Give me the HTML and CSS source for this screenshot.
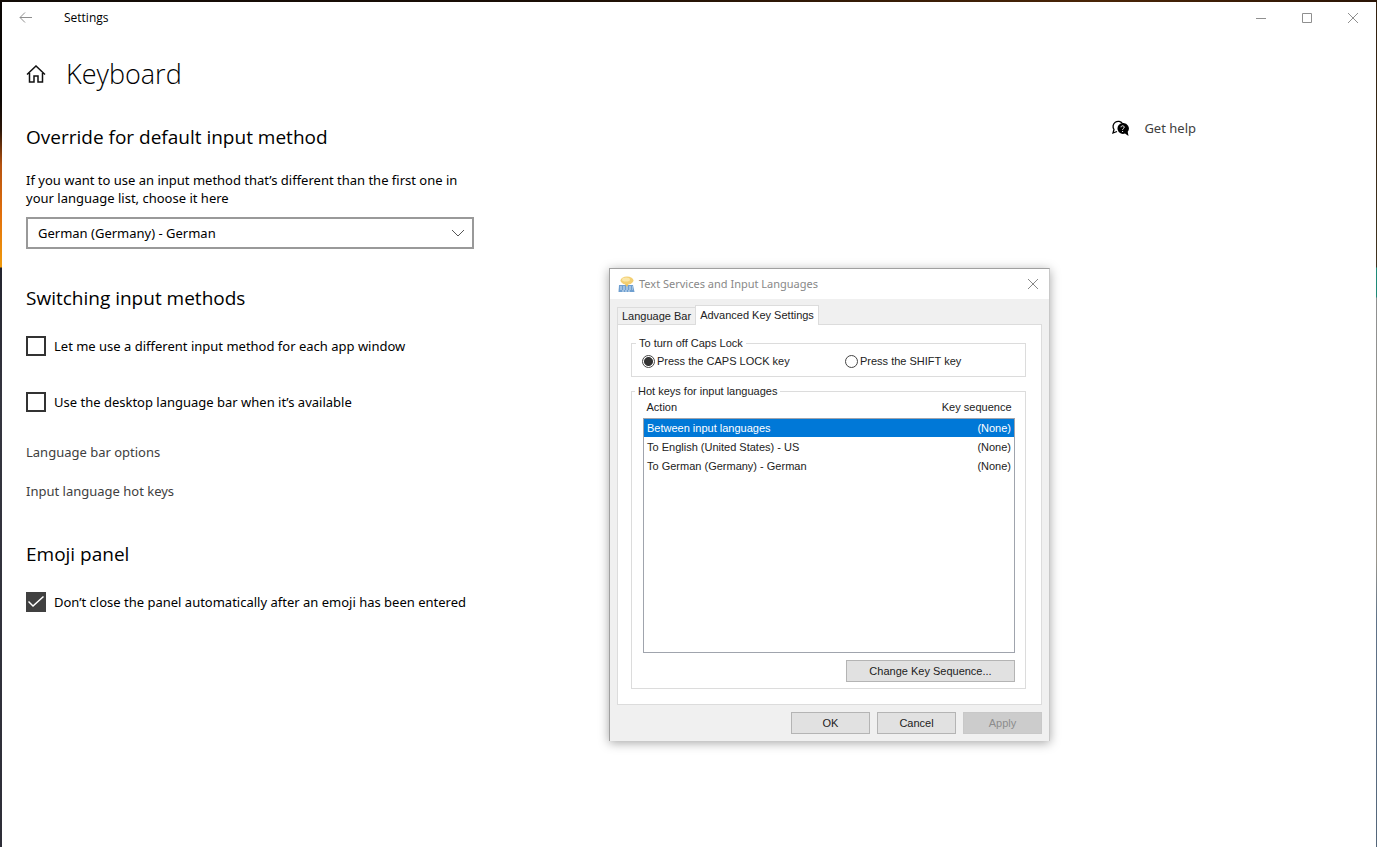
FILE: index.html
```html
<!DOCTYPE html>
<html lang="en">
<head>
    <meta charset="UTF-8">
    <meta name="viewport" content="width=device-width, initial-scale=1.0">
    <title>Settings</title>
    <link rel="stylesheet" href="styles.css">
</head>
<body>
    <div class="window">
        <header class="titlebar">
            <button class="back" aria-label="Back">
                <svg width="14" height="12" viewBox="0 0 14 12"><path d="M13 5.500H1M6 .5l-5 5 5 5"/></svg>
            </button>
            <span class="app-name">Settings</span>
            <div class="window-buttons">
                <button aria-label="Minimize"><svg width="11" height="11" viewBox="0 0 11 11"><path d="M0 5.5h10"/></svg></button>
                <button aria-label="Maximize"><svg width="11" height="11" viewBox="0 0 11 11"><path d="M.5.5h9v9h-9z"/></svg></button>
                <button aria-label="Close"><svg width="11" height="11" viewBox="0 0 11 11"><path d="M0 0l10 10M10 0L0 10"/></svg></button>
            </div>
        </header>

        <div class="page-title">
            <a href="#" class="home" aria-label="Home">
                <svg width="20" height="18" viewBox="0 0 20 18"><path d="M1 9.5L10 1l9 8.5M3.5 8v9H8v-6h4v6h4.500V8"/></svg>
            </a>
            <h1>Keyboard</h1>
        </div>

        <div class="columns">
            <main class="settings">
                <section>
                    <h2>Override for default input method</h2>
                    <label class="description" for="method">If you want to use an input method that’s different than the first one in your language list, choose it here</label>
                    <div class="dropdown">
                        <select id="method">
                            <option>German (Germany) - German</option>
                        </select>
                        <svg width="14" height="8" viewBox="0 0 14 8"><path d="M1 1l6 6 6-6"/></svg>
                    </div>
                </section>
                <section>
                    <h2>Switching input methods</h2>
                    <label class="check"><input type="checkbox">Let me use a different input method for each app window</label>
                    <label class="check"><input type="checkbox">Use the desktop language bar when it’s available</label>
                    <nav class="links">
                        <a href="#">Language bar options</a>
                        <a href="#">Input language hot keys</a>
                    </nav>
                </section>
                <section>
                    <h2>Emoji panel</h2>
                    <label class="check"><input type="checkbox" checked>Don’t close the panel automatically after an emoji has been entered</label>
                </section>
            </main>
            <aside>
                <a href="#" class="help">
                    <svg width="17" height="17" viewBox="0 0 17 17">
                        <path class="bubble" d="M5 11.500L1 13l1-3.500A5 5 0 1 1 10.500 3.500"/>
                        <path class="bubble-full" d="M10.500 3a5.500 5.500 0 1 0 2.500 10.600l3.500 2.400-.8-4.200A5.500 5.500 0 0 0 10.500 3z"/>
                        <path class="mark" d="M9 7.300c0-2 3.200-2 3.200 0 0 1.200-1.600 1.200-1.600 2.500M10.600 11v1"/>
                    </svg>
                    Get help
                </a>
            </aside>
        </div>
    </div>

    <div class="dialog" role="dialog" aria-labelledby="dialog-title">
        <div class="dialog-title">
            <svg width="17" height="17" viewBox="0 0 17 17">
                <path d="M1 9h14l1.500 7H.5z" fill="#6f9fd0"/>
                <path d="M2 11h13M2 13h13M4 15h9" stroke="#d3e3f2" stroke-dasharray="2 1"/>
                <path d="M6 7l3 4 2-4z" fill="#eec35c"/>
                <ellipse cx="9" cy="4.500" rx="6.500" ry="4" fill="#f3cf72"/>
                <ellipse cx="8" cy="3.500" rx="4" ry="2" fill="#fae6a8"/>
            </svg>
            <span id="dialog-title">Text Services and Input Languages</span>
            <button aria-label="Close"><svg width="11" height="11" viewBox="0 0 11 11"><path d="M0 0l10 10M10 0L0 10"/></svg></button>
        </div>
        <div class="dialog-body">
            <div class="tabs" role="tablist">
                <button role="tab" aria-selected="false">Language Bar</button>
                <button role="tab" aria-selected="true" class="active">Advanced Key Settings</button>
            </div>
            <div class="panel">
                <fieldset class="caps">
                    <legend>To turn off Caps Lock</legend>
                    <label><input type="radio" name="caps" checked>Press the CAPS LOCK key</label>
                    <label><input type="radio" name="caps">Press the SHIFT key</label>
                </fieldset>
                <fieldset class="hotkeys">
                    <legend>Hot keys for input languages</legend>
                    <table>
                        <thead>
                            <tr><th>Action</th><th>Key sequence</th></tr>
                        </thead>
                        <tbody>
                            <tr class="selected"><td>Between input languages</td><td>(None)</td></tr>
                            <tr><td>To English (United States) - US</td><td>(None)</td></tr>
                            <tr><td>To German (Germany) - German</td><td>(None)</td></tr>
                            <tr class="filler"><td colspan="2"></td></tr>
                        </tbody>
                    </table>
                    <button class="push change">Change Key Sequence...</button>
                </fieldset>
            </div>
            <div class="actions">
                <button class="push">OK</button>
                <button class="push">Cancel</button>
                <button class="push" disabled>Apply</button>
            </div>
        </div>
    </div>
</body>
</html>
```

FILE: styles.css
```css
* {
    box-sizing: border-box;
}
body {
    margin: 0;
    padding: 2px 1px 0 2px;
    min-height: 100vh;
    display: flex;
    font-family: "Noto Sans", "Open Sans", sans-serif;
    font-size: 13px;
    line-height: 18px;
    color: #000;
    /* desktop showing round the window */
    background:
        linear-gradient(90deg, #120b06, #1a0e05 40%, #4a2506 80%, #2a1405) top / 100% 2px no-repeat,
        linear-gradient(#0a0604 100px, #2a1508 130px, #b65310 165px, #e2700c 215px, #ef9a0c 267px, #23242f 268px, #34353f 400px, #2e2e38) left / 2px 100% no-repeat,
        linear-gradient(#33210f 60px, #41331f 267px, #1f8a78 268px, #1f8a78 297px, #8f9090 298px, #99958c 560px, #5f7288 620px, #54667a) right / 1px 100% no-repeat;
}
button, select, input {
    font: inherit;
    color: inherit;
    margin: 0;
}
button {
    padding: 0;
    border: none;
    background: none;
}
a {
    color: #404040;
    text-decoration: none;
}
svg {
    display: block;
    fill: none;
}
.window {
    flex: 1;
    background-color: #fff;
}

/* title bar */
.titlebar {
    display: flex;
    align-items: center;
    height: 32px;
    font-family: "Open Sans", "Noto Sans", sans-serif;
    font-size: 12px;
}
.titlebar svg {
    stroke: #8f8f8f;
}
.back {
    display: flex;
    justify-content: center;
    width: 48px;
}
.app-name {
    margin-left: 14px;
}
.window-buttons {
    display: flex;
    margin-left: auto;
}
.window-buttons button {
    display: flex;
    justify-content: center;
    width: 46px;
}

.page-title {
    display: flex;
    align-items: center;
    gap: 20px;
    margin-top: 20px;
    padding-left: 24px;
    height: 40px;
}
.home svg {
    stroke: #111;
    stroke-width: 1.5;
}
h1 {
    margin: 0;
    font-family: "Open Sans", "Noto Sans", sans-serif;
    font-size: 27px;
    font-weight: 300;
    line-height: 40px;
}
h2 {
    margin: 0;
    font-family: "Open Sans", "Noto Sans", sans-serif;
    font-size: 19px;
    font-weight: 400;
    line-height: 28px;
}

/* settings */
.columns {
    display: flex;
    justify-content: space-between;
    padding: 29px 180px 40px 24px;
}
.settings {
    width: 448px;
}
section {
    margin-bottom: 35px;
}
.description {
    display: block;
    margin: 20px 0 10px;
}
.dropdown {
    display: grid;
    align-items: center;
}
.dropdown select,
.dropdown svg {
    grid-area: 1 / 1;
}
.dropdown select {
    appearance: none;
    height: 32px;
    padding: 0 10px;
    border: 2px solid #999;
    border-radius: 0;
    background-color: #fff;
}
.dropdown svg {
    justify-self: end;
    margin-right: 9px;
    stroke: #555;
    pointer-events: none;
}
.check {
    display: flex;
    align-items: center;
    gap: 8px;
    height: 20px;
    margin-top: 24px;
}
.check + .check {
    margin-top: 36px;
}
.check input {
    appearance: none;
    width: 20px;
    height: 20px;
    border: 2px solid #333;
    display: grid;
    place-items: center;
}
.check input:checked {
    background-color: #404040;
    border-color: #404040;
}
.check input:checked::before {
    content: "";
    width: 16px;
    height: 12px;
    background-color: #fff;
    clip-path: polygon(0 6px, 1px 5px, 5px 9px, 15px 0, 16px 1px, 5px 11px);
}
.links {
    display: flex;
    flex-direction: column;
    gap: 21px;
    margin: 31px 0 40px;
}
.help {
    display: flex;
    align-items: center;
    gap: 15px;
    margin-top: -4px;
}
.bubble {
    stroke: #000;
    stroke-width: 1.3;
}
.bubble-full {
    fill: #000;
}
.mark {
    stroke: #fff;
}

/* dialog */
.dialog {
    position: absolute;
    left: 609px;
    top: 268px;
    width: 441px;
    border: 1px solid #a0a0a0;
    border-right-color: #c8c8c8;
    border-bottom: none;
    background-color: #f0f0f0;
    box-shadow: 0 2px 10px rgba(0, 0, 0, 0.35);
    font-family: "Liberation Sans", Arial, sans-serif;
    font-size: 11px;
    line-height: 14px;
    color: #222;
}
.dialog-title {
    display: flex;
    align-items: center;
    gap: 4px;
    height: 30px;
    padding: 0 10px 0 8px;
    background-color: #fff;
    color: #888;
    font-family: "Noto Sans", "Open Sans", sans-serif;
    font-size: 11px;
}
.dialog-title button {
    margin-left: auto;
}
.dialog-title button svg {
    stroke: #888;
}
.dialog-body {
    padding: 6px 7px 7px;
}
.tabs {
    display: flex;
    align-items: flex-end;
}
.tabs button {
    height: 17px;
    padding: 0 4px;
    border: 1px solid #dcdcdc;
    border-width: 1px 0 0 1px;
}
.tabs .active {
    height: 20px;
    margin-bottom: -1px;
    padding: 0 4px 2px;
    border-width: 1px 1px 0;
    background-color: #fff;
}
.panel {
    padding: 11px 15px 15px 13px;
    border: 1px solid #dcdcdc;
    background-color: #fff;
}
fieldset {
    margin: 0;
    min-width: 0;
    border: 1px solid #dcdcdc;
}
legend {
    padding: 0 3px;
}
.caps {
    display: grid;
    grid-template-columns: 203px 1fr;
    padding: 4px 10px 8px;
}
.caps legend {
    margin-left: -6px;
}
.caps label {
    display: flex;
    align-items: center;
    gap: 2px;
}
.caps input {
    appearance: none;
    width: 13px;
    height: 13px;
    border: 1px solid #444;
    border-radius: 50%;
}
.caps input:checked {
    background: radial-gradient(#333 4px, #fff 5px);
}
.hotkeys {
    margin-top: 7px;
    padding: 1px 10px 6px 11px;
}
.hotkeys legend {
    margin-left: -8px;
}
table {
    width: 100%;
    border-collapse: collapse;
}
th, td {
    height: 19px;
    padding: 0 3px;
    text-align: left;
    font-weight: 400;
}
th {
    padding-bottom: 2px;
}
th:last-child, td:last-child {
    text-align: right;
}
tbody {
    border: 1px solid #a0a4ad;
}
.selected {
    background-color: #0078d7;
    color: #fff;
}
.filler td {
    height: 177px;
}
.push {
    width: 79px;
    height: 22px;
    border: 1px solid #b4b4b4;
    background-color: #e1e1e1;
}
.push:disabled {
    border-color: #c8c8c8;
    background-color: #ccc;
    color: #8c8c8c;
}
.change {
    display: block;
    width: 169px;
    margin: 7px 0 0 auto;
}
.actions {
    display: flex;
    justify-content: flex-end;
    gap: 7px;
    margin-top: 7px;
}
```
